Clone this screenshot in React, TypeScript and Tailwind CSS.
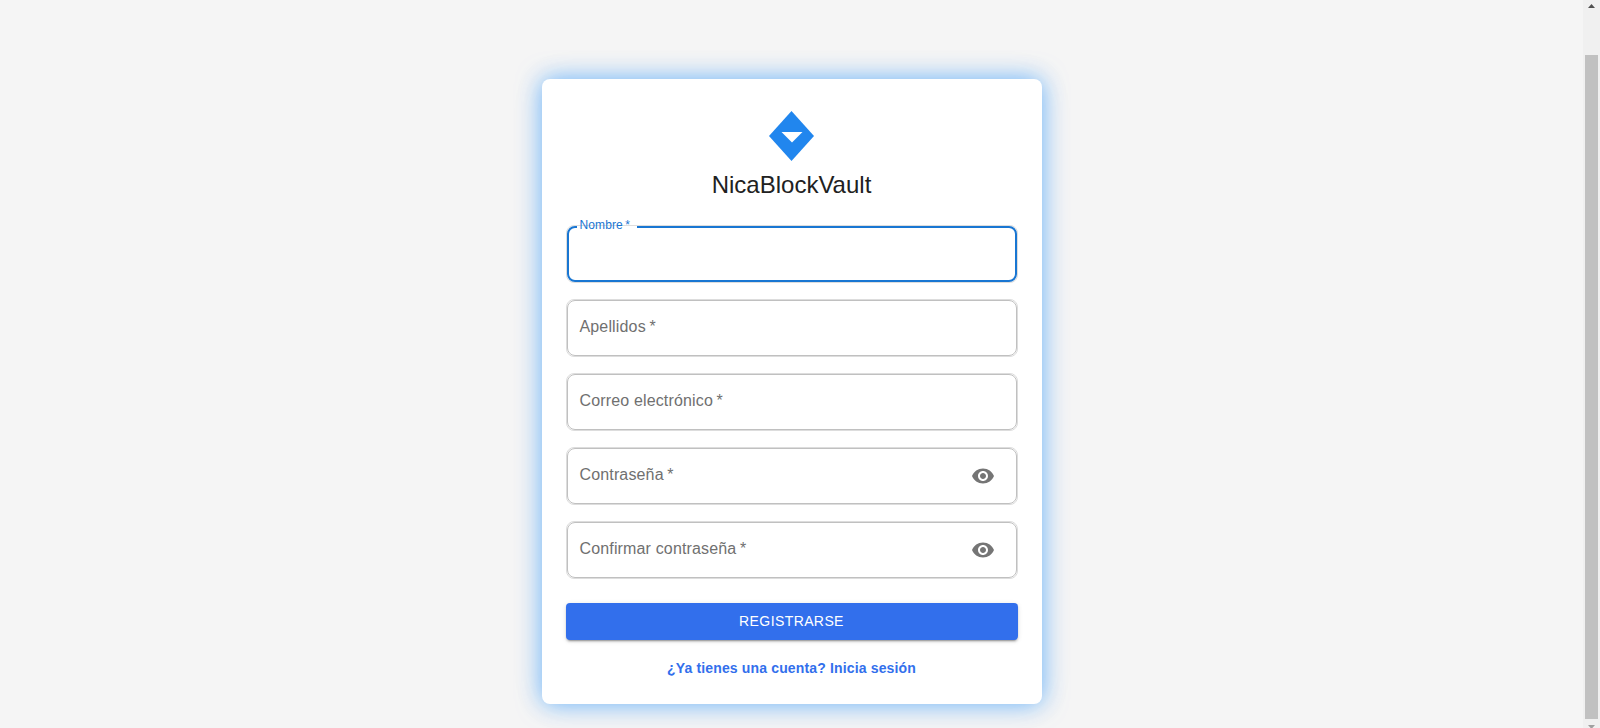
import { useState } from "react";

type FieldProps = {
  id: string;
  label: string;
  type?: string;
  active: boolean;
  onFocus: () => void;
};

function EyeIcon() {
  return (
    <svg viewBox="0 0 24 24" className="size-6" fill="currentColor" aria-hidden="true">
      <path d="M12 4.5C7 4.5 2.73 7.61 1 12c1.73 4.39 6 7.5 11 7.5s9.27-3.11 11-7.5c-1.73-4.39-6-7.5-11-7.5M12 17c-2.76 0-5-2.24-5-5s2.24-5 5-5 5 2.24 5 5-2.24 5-5 5m0-8c-1.66 0-3 1.34-3 3s1.34 3 3 3 3-1.34 3-3-1.34-3-3-3" />
    </svg>
  );
}

function Field({ id, label, type = "text", active, onFocus }: FieldProps) {
  const [value, setValue] = useState("");
  const [visible, setVisible] = useState(false);
  const isPassword = type === "password";
  const raised = active || value !== "";

  return (
    <div className="relative flex h-[58px] items-center rounded-lg border border-[#dddddd]">
      <label
        htmlFor={id}
        className={
          raised
            ? `pointer-events-none absolute -top-[9px] left-[13px] z-10 text-xs leading-4 tracking-[0.1px] ${active ? "text-[#1976d2]" : "text-[#707070]"}`
            : "pointer-events-none absolute top-[15px] left-[13px] z-10 text-base leading-6 tracking-[0.15px] text-[#707070]"
        }
      >
        {label} <span className="-ml-px">*</span>
      </label>
      <input
        id={id}
        type={isPassword && visible ? "text" : type}
        value={value}
        onChange={(e) => setValue(e.target.value)}
        onFocus={onFocus}
        required
        className="h-full min-w-0 flex-1 bg-transparent px-[13px] text-base text-[#212121] outline-none"
      />
      {isPassword && (
        <button
          type="button"
          aria-label="Mostrar contraseña"
          onClick={() => setVisible(!visible)}
          className="relative z-10 mr-[14px] p-2 text-[#757575]"
        >
          <EyeIcon />
        </button>
      )}
      <fieldset
        aria-hidden="true"
        className={
          active
            ? "pointer-events-none absolute inset-x-0 -top-[5px] bottom-0 rounded-lg border-2 border-[#1976d2] px-2"
            : "pointer-events-none absolute inset-x-0 -top-[5px] bottom-0 rounded-lg border border-[#c0c0c0] px-2"
        }
      >
        <legend className={raised ? "h-[11px] px-[5px] text-xs leading-[11px]" : "h-[11px] w-0 overflow-hidden"}>
          {raised && <span className="opacity-0">{label} *</span>}
        </legend>
      </fieldset>
    </div>
  );
}

const fields = [
  { id: "nombre", label: "Nombre" },
  { id: "apellidos", label: "Apellidos" },
  { id: "correo", label: "Correo electrónico", type: "email" },
  { id: "contrasena", label: "Contraseña", type: "password" },
  { id: "confirmar", label: "Confirmar contraseña", type: "password" },
];

export default function App() {
  const [active, setActive] = useState("nombre");

  return (
    <div className="flex min-h-screen bg-[#f5f5f5] font-['Liberation_Sans',Arial,sans-serif]">
      <main className="flex min-w-0 flex-1 justify-center pt-[79px] pb-6">
        <form
          onSubmit={(e) => e.preventDefault()}
          className="flex w-full max-w-[500px] flex-col self-start rounded-lg bg-white px-6 pt-8 pb-6 shadow-[0_0_24px_rgba(30,144,255,0.64),0_0_40px_rgba(30,100,200,0.05)]"
        >
          <div className="flex flex-col items-center">
            <svg viewBox="0 0 46 50" className="h-[50px] w-[46px]" aria-hidden="true">
              <path d="M22.500 0 45 25 22.500 50 0 25Z" fill="#2186ee" />
              <path d="M12.500 21H33.500L23 31.500Z" fill="#fff" />
            </svg>
            <h1 className="mt-2 text-2xl leading-8 text-[#212121]">NicaBlockVault</h1>
          </div>

          <div className="mt-6 flex flex-col gap-4">
            {fields.map((f) => (
              <Field key={f.id} {...f} active={active === f.id} onFocus={() => setActive(f.id)} />
            ))}
          </div>

          <button
            type="submit"
            className="mt-6 h-[37px] rounded bg-[#326fec] pb-[2px] text-sm tracking-[0.4px] text-white shadow-[0_3px_1px_-2px_rgba(0,0,0,0.2),0_2px_2px_0_rgba(0,0,0,0.14),0_1px_5px_0_rgba(0,0,0,0.12)]"
          >
            REGISTRARSE
          </button>
          <a href="#login" className="mt-4 self-center py-[2px] text-sm leading-5 font-bold tracking-[0.15px] text-[#326fec]">
            ¿Ya tienes una cuenta? Inicia sesión
          </a>
        </form>
      </main>

      <div className="flex w-[17px] flex-col items-center bg-[#f0f0f0]" aria-hidden="true">
        <svg viewBox="0 0 7 4" className="mt-1 h-1 w-[7px]">
          <path d="M3.500 0 7 4H0Z" fill="#505050" />
        </svg>
        <div className="mt-[47px] w-[13px] flex-1 bg-[#c1c1c1]" />
        <svg viewBox="0 0 7 4" className="mt-[6px] h-[3px] w-[7px]" preserveAspectRatio="xMidYMin slice">
          <path d="M0 0H7L3.500 4Z" fill="#a0a0a0" />
        </svg>
      </div>
    </div>
  );
}
